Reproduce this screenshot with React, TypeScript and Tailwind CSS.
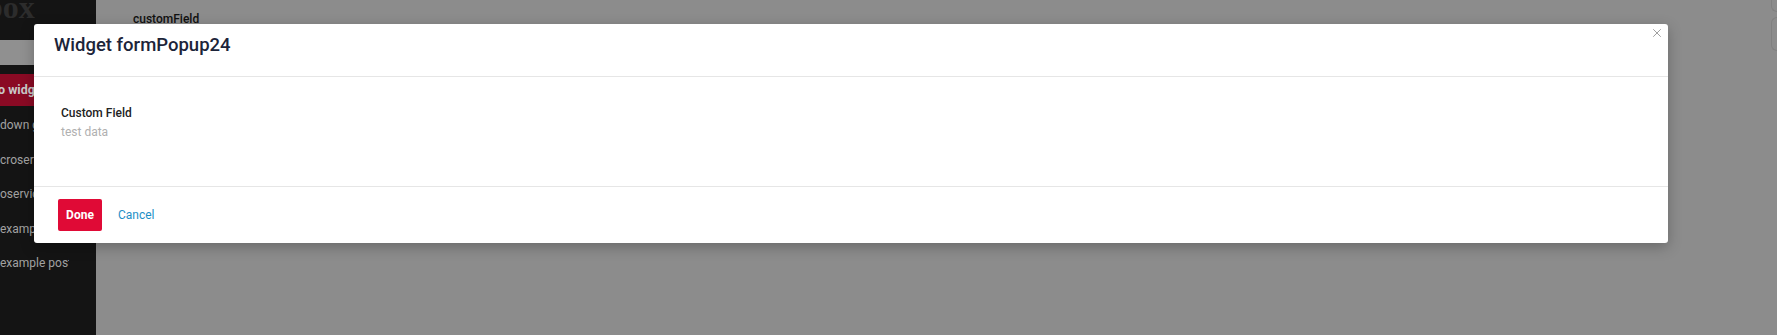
import { X } from "lucide-react";

const MENU = ["down g", "croservi", "oservic", "examp", "example post"];

export default function App() {
  return (
    <div className="relative flex h-[335px] w-full overflow-hidden font-['Roboto',sans-serif]">
      {/* Sidebar */}
      <aside className="flex w-[96px] shrink-0 flex-col bg-[#141414]">
        <div className="-mt-[13px] h-[40px] pl-[2px] font-['Liberation_Serif',serif] text-[32px] font-bold leading-[40px] text-[#2c2c2c] overflow-hidden whitespace-nowrap">
          <span className="-ml-[17px] inline-block">box</span>
        </div>
        <div className="mt-[13px] h-[25px] bg-[#909090]" />
        <div className="mt-[9px] flex h-[32px] items-center bg-[#8a0a24] text-[12.5px] font-bold text-[#c9c9c9] whitespace-nowrap overflow-hidden">
          <span className="-ml-[2px]">o widgets</span>
        </div>
        <div className="pt-[2px]">
          {MENU.map((m) => (
            <div
              key={m}
              className="flex h-[34.5px] items-center text-[12px] text-[#a2a2a2] whitespace-nowrap"
            >
              <span className="w-[69px] overflow-hidden">{m}</span>
            </div>
          ))}
        </div>
      </aside>

      {/* Main content behind overlay */}
      <main className="flex flex-1 justify-between bg-[#8c8c8c]">
        <div className="pl-[37px] pt-[11px] text-[12px] font-medium leading-4 text-[#111]">
          customField
        </div>
        <div className="flex flex-col gap-[5px]">
          <div className="-mt-[6px] h-[18px] w-[6px] rounded-l-[6px] border border-r-0 border-[#808080]" />
          <div className="h-[34px] w-[6px] rounded-l-[6px] border border-r-0 border-[#808080]" />
        </div>
      </main>

      {/* Modal */}
      <div className="absolute left-[34px] top-[24px] flex w-[1634px] flex-col rounded-[3px] bg-white shadow-[0_4px_14px_rgba(0,0,0,0.25)]">
        <button className="absolute right-[4px] top-[2px] text-[#8a8a8a]">
          <X size={14} strokeWidth={1.4} />
        </button>
        <div className="h-[53px] border-b border-[#e6e6e6] pl-[20px] pt-[9px]">
          <h2 className="text-[18.5px] font-medium leading-6 text-[#1c2439]">Widget formPopup24</h2>
        </div>
        <div className="h-[110px] border-b border-[#e6e6e6] pl-[27px] pt-[28px]">
          <div className="text-[12px] font-medium leading-4 text-[#222]">Custom Field</div>
          <div className="mt-[3px] text-[12px] leading-4 text-[#b0b0b0]">test data</div>
        </div>
        <div className="flex h-[56px] items-center gap-[16px] pl-[24px]">
          <button className="h-[32px] w-[44px] rounded-[2px] bg-[#e00a36] text-[12px] font-bold text-white">
            Done
          </button>
          <button className="text-[12px] text-[#1e8fc6]">Cancel</button>
        </div>
      </div>
    </div>
  );
}
